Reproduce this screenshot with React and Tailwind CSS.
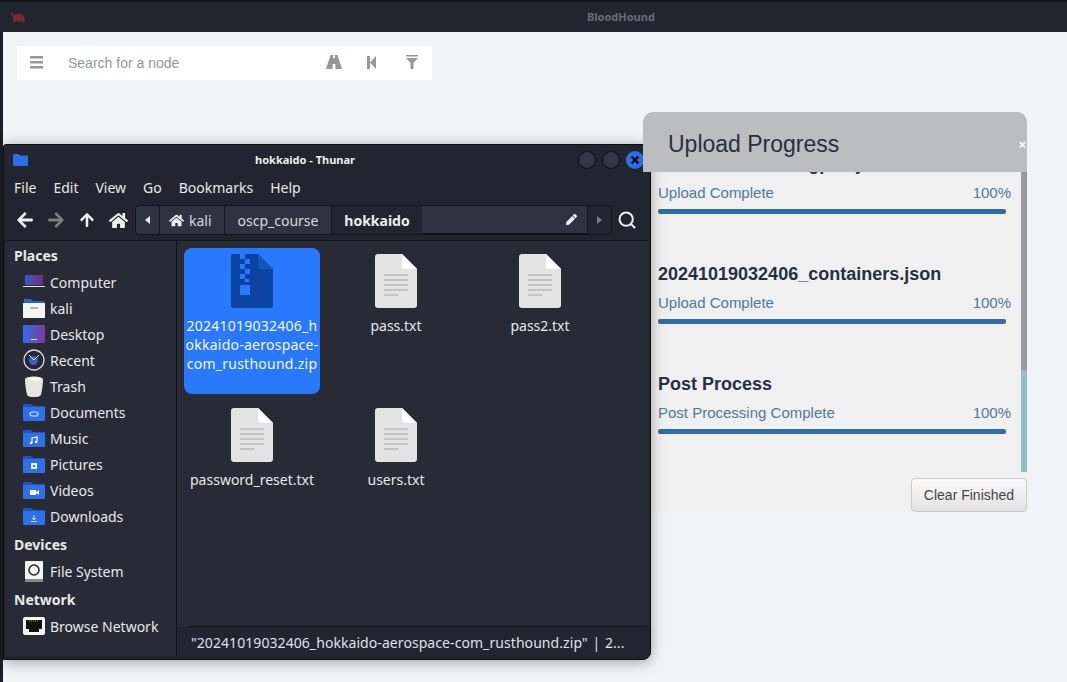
import React from "react";
import { FaPen, FaHome, FaArrowLeft, FaArrowRight, FaArrowUp } from "react-icons/fa";
import { FiSearch } from "react-icons/fi";

const Folder = ({ children }) => (
  <svg width="22" height="18" viewBox="0 0 22 18">
    <path d="M0 2a1 1 0 0 1 1-1h7l2 2h11a1 1 0 0 1 1 1v2H0z" fill="#1b55c9" />
    <path d="M0 4h22v13a1 1 0 0 1-1 1H1a1 1 0 0 1-1-1z" fill="#2f6fe8" />
    {children}
  </svg>
);

const sideIcons = {
  computer: (
    <svg width="22" height="14" viewBox="0 0 22 14">
      <defs>
        <linearGradient id="lap" x1="0" x2="1">
          <stop offset="0" stopColor="#3558c8" />
          <stop offset="1" stopColor="#7b2a7e" />
        </linearGradient>
      </defs>
      <rect x="2" y="0" width="18" height="10" fill="url(#lap)" />
      <rect x="0" y="11" width="22" height="1" fill="#e8e8e8" />
    </svg>
  ),
  kali: (
    <svg width="22" height="20" viewBox="0 0 22 20">
      <path d="M1 1h7l2 2h11v4H1z" fill="#2763d8" />
      <path d="M0 5h22v15H0z" fill="#f4f4f4" />
      <rect x="7" y="9" width="8" height="2" fill="#b5b5b5" />
    </svg>
  ),
  desktop: (
    <svg width="22" height="18" viewBox="0 0 22 18">
      <defs>
        <linearGradient id="dsk" x1="0" x2="1">
          <stop offset="0" stopColor="#2f6fe8" />
          <stop offset="1" stopColor="#7b3aa0" />
        </linearGradient>
      </defs>
      <rect width="22" height="18" rx="1" fill="url(#dsk)" />
      <rect x="8" y="14" width="6" height="1" fill="#e8e8e8" />
    </svg>
  ),
  recent: (
    <svg width="22" height="22" viewBox="0 0 22 22">
      <circle cx="11" cy="11" r="10" fill="#252935" stroke="#d8d8d8" strokeWidth="1.3" />
      <circle cx="10.5" cy="11.5" r="4.5" fill="#2763d8" />
      <path d="M11 11 6 6M11 11l5-5" stroke="#e8e8e8" strokeWidth="1" />
      <path d="M11 11v5" stroke="#c8382e" strokeWidth="1" />
    </svg>
  ),
  trash: (
    <svg width="18" height="21" viewBox="0 0 18 21">
      <path d="M0 3.500C0 -.5 18 -.5 18 3.500c0 5-1 11-2 15-.5 3.500-13.500 3.500-14 0-1-4-2-10-2-15z" fill="#e6e6e0" />
      <ellipse cx="9" cy="3" rx="7" ry="1.800" fill="#fbf7d8" />
    </svg>
  ),
  documents: (
    <Folder>
      <rect x="7" y="9" width="8" height="4" rx="2" fill="none" stroke="#cfe0ff" strokeWidth="1.200" />
    </Folder>
  ),
  music: (
    <Folder>
      <path d="M9 14V9l5-1v5" fill="none" stroke="#fff" strokeWidth="1.200" />
      <circle cx="8" cy="14" r="1.200" fill="#fff" />
      <circle cx="13" cy="13" r="1.200" fill="#fff" />
    </Folder>
  ),
  pictures: (
    <Folder>
      <rect x="8" y="8" width="6" height="6" fill="#e8f0ff" />
      <rect x="10" y="10" width="2" height="2" fill="#2f6fe8" />
    </Folder>
  ),
  videos: (
    <Folder>
      <rect x="7" y="9" width="6" height="5" fill="#fff" />
      <path d="M13 11l3-2v5l-3-2z" fill="#fff" />
    </Folder>
  ),
  downloads: (
    <Folder>
      <path d="M11 8v4M9 11l2 2 2-2M8 14.500h6" fill="none" stroke="#cfe0ff" strokeWidth="1" />
    </Folder>
  ),
  fs: (
    <svg width="18" height="21" viewBox="0 0 18 21">
      <rect width="18" height="21" rx="1" fill="#f4f4f4" />
      <circle cx="9" cy="9" r="5" fill="none" stroke="#222" strokeWidth="1.500" />
      <rect y="18" width="18" height="3" fill="#888" />
    </svg>
  ),
  net: (
    <svg width="22" height="19" viewBox="0 0 22 19">
      <rect width="22" height="18" rx="2" fill="#f6f6f6" />
      <path d="M3 3h16v9h-3v3H6v-3H3z" fill="#111" />
      <path d="M6 4h10" stroke="#d4a73a" strokeWidth="1" strokeDasharray="1 1" />
    </svg>
  ),
};

const SideRow = ({ icon, label }) => (
  <div className="flex items-center h-[26px] pl-[16px]">
    <span className="flex w-[28px] h-[22px] items-center justify-center shrink-0 pr-[2px]">{sideIcons[icon]}</span>
    <span className="ml-[1px] whitespace-nowrap">{label}</span>
  </div>
);

const TxtIcon = () => (
  <svg width="44" height="54" viewBox="0 0 44 54">
    <path d="M4 0h24l15 15v36a3 3 0 0 1-3 3H4a3 3 0 0 1-3-3V3a3 3 0 0 1 3-3z" fill="#e3e3e3" />
    <path d="M28 0l15 15H31a3 3 0 0 1-3-3z" fill="#ffffff" />
    <path d="M10 21h24M10 26h24M10 31h24M10 36h24M10 41h14" stroke="#a3a3a3" strokeWidth="1.200" />
  </svg>
);

const ZipIcon = () => (
  <svg width="44" height="54" viewBox="0 0 44 54">
    <path d="M3 0h25l15 15v37a2 2 0 0 1-2 2H3a2 2 0 0 1-2-2V2a2 2 0 0 1 2-2z" fill="#0a43a0" />
    <path d="M28 0l15 15H31a3 3 0 0 1-3-3z" fill="#1257b8" />
    <path d="M10 0h5v5h-5zM15 5h5v5h-5zM10 10h5v5h-5zM15 15h5v5h-5zM10 20h5v5h-5zM15 25h4v3h-4z" fill="#2979ff" />
    <rect x="10" y="31" width="10" height="10" fill="#2979ff" />
  </svg>
);

const Progress = ({ title, status, cls = "mb-[50px]" }) => (
  <div className={cls}>
    <div className="text-[18px] leading-[20px] font-bold text-[#27303f] whitespace-nowrap">{title}</div>
    <div className="flex justify-between mt-[9px] text-[15px] leading-[20px] text-[#4c7a9e]">
      <span>{status}</span>
      <span>100%</span>
    </div>
    <div className="mt-[6px] w-[348px] h-[5px] rounded-[2px] bg-[#2f6da3]" />
  </div>
);

function ThunarWindow() {
  return (
    <div
      className="absolute left-[3px] top-[144px] w-[648px] h-[516px] rounded-tr-[8px] rounded-br-[8px] rounded-tl-[3px] bg-[#22252f] border border-[#0d0e12] text-[#e8e8e8] text-[14px] flex flex-col shadow-[0_2px_14px_rgba(0,0,0,0.35)] overflow-hidden"
      style={{ fontFamily: '"Noto Sans", sans-serif' }}
    >
      {/* title bar */}
      <div className="relative h-[29px] flex items-center shrink-0">
        <svg className="ml-[9px]" width="15" height="12" viewBox="0 0 15 12">
          <path d="M0 1a1 1 0 0 1 1-1h4l2 1.500h7a1 1 0 0 1 1 1V11a1 1 0 0 1-1 1H1a1 1 0 0 1-1-1z" fill="#2b6fe8" />
        </svg>
        <div className="absolute inset-x-0 top-[7px] text-center text-[11px] leading-[16px] font-bold text-[#eeeeee] pr-[44px]">
          hokkaido - Thunar
        </div>
        <div className="ml-auto flex gap-[6px] mr-[6px] mt-[1px]">
          <span className="w-[18px] h-[18px] rounded-full bg-[#333846] border border-[#0d0e12]" />
          <span className="w-[18px] h-[18px] rounded-full bg-[#333846] border border-[#0d0e12]" />
          <span className="w-[18px] h-[18px] rounded-full bg-[#2b6fe8] flex items-center justify-center">
            <svg width="10" height="10" viewBox="0 0 10 10">
              <path d="M1.500 1.500l7 7M8.500 1.500l-7 7" stroke="#07090f" strokeWidth="2.400" />
            </svg>
          </span>
        </div>
      </div>
      {/* menu */}
      <div className="h-[26px] flex items-center gap-[17px] pl-[10px] shrink-0">
        {["File", "Edit", "View", "Go", "Bookmarks", "Help"].map((m) => (
          <span key={m}>{m}</span>
        ))}
      </div>
      {/* toolbar */}
      <div className="h-[41px] flex items-center shrink-0 border-b border-[#12141a] mx-[2px]">
        <FaArrowLeft className="ml-[10px] text-[#f0f0f0]" size={18} />
        <FaArrowRight className="ml-[13px] text-[#808080]" size={18} />
        <FaArrowUp className="ml-[14px] text-[#f0f0f0]" size={16} />
        <FaHome className="ml-[14px] text-[#f0f0f0]" size={19} />
        <div className="ml-[7px] h-[30px] flex items-stretch border border-[#12141a] rounded-[4px] bg-[#2f3341] w-[477px] overflow-hidden text-[#d7d9de]">
          <span className="w-[24px] flex items-center justify-center border-r border-[#12141a]">
            <svg width="5" height="8" viewBox="0 0 5 8"><path d="M5 0v8L0 4z" fill="#e8e8e8" /></svg>
          </span>
          <span className="w-[65px] flex items-center border-r border-[#12141a] pl-[9px] gap-[5px]">
            <FaHome size={15} className="text-[#eeeeee]" />
            kali
          </span>
          <span className="w-[107px] flex items-center justify-center border-r border-[#12141a]">oscp_course</span>
          <span className="w-[90px] flex items-center justify-center bg-[#22252f] font-bold text-[#eeeeee]">hokkaido</span>
          <span className="flex-1 flex items-center justify-end pr-[10px] border-b border-[#0d0e12]">
            <FaPen size={11} className="text-[#f0f0f0]" />
          </span>
          <span className="w-[24px] flex items-center justify-center bg-[#22252f] border-l border-[#12141a]">
            <svg width="5" height="8" viewBox="0 0 5 8"><path d="M0 0v8l5-4z" fill="#7d7f86" /></svg>
          </span>
        </div>
        <FiSearch className="ml-[5px] text-[#f0f0f0]" size={20} strokeWidth={2.4} />
      </div>
      {/* body */}
      <div className="flex-1 flex min-h-0 bg-[#282a36] mx-[1px] mb-[3px]">
        <div className="w-[172px] shrink-0 border-r border-[#12141a] pt-[1px]">
          <div className="h-[26px] mb-[1px] flex items-center pl-[9px] font-bold">Places</div>
          {[
            ["computer", "Computer"],
            ["kali", "kali"],
            ["desktop", "Desktop"],
            ["recent", "Recent"],
            ["trash", "Trash"],
            ["documents", "Documents"],
            ["music", "Music"],
            ["pictures", "Pictures"],
            ["videos", "Videos"],
            ["downloads", "Downloads"],
          ].map(([i, l]) => (
            <SideRow key={l} icon={i} label={l} />
          ))}
          <div className="h-[28px] flex items-center pl-[9px] font-bold mt-[1px]">Devices</div>
          <SideRow icon="fs" label="File System" />
          <div className="h-[28px] flex items-center pl-[9px] font-bold mt-[1px]">Network</div>
          <SideRow icon="net" label="Browse Network" />
        </div>
        <div className="flex-1 flex flex-col min-w-0">
          <div className="flex-1 pt-[7px] pl-[3px] grid grid-cols-[144px_144px_144px] grid-rows-[154px_154px] content-start">
            <div className="mx-[4px] h-[146px] rounded-[8px] bg-[#2979ff] flex flex-col items-center pt-[6px]">
              <ZipIcon />
              <div className="mt-[8px] w-[136px] text-center leading-[19px] break-all tracking-[0.25px] text-[#f4f7ff]">
                20241019032406_hokkaido-aerospace-com_rusthound.zip
              </div>
            </div>
            {["pass.txt", "pass2.txt", "password_reset.txt", "users.txt"].map((f) => (
              <div key={f} className="flex flex-col items-center pt-[6px]">
                <TxtIcon />
                <div className="mt-[8px] leading-[19px] text-center whitespace-nowrap">{f}</div>
              </div>
            ))}
          </div>
          <div className="h-[1px] ml-[10px] mr-[2px] bg-[#12141a]" />
          <div className="h-[29px] bg-[#22252f] flex items-center pt-[1px] pl-[14px] whitespace-nowrap tracking-[0.07px] [word-spacing:1px] text-[#dfe1e6]">
            "20241019032406_hokkaido-aerospace-com_rusthound.zip" | 2...
          </div>
        </div>
      </div>
    </div>
  );
}

function UploadPanel() {
  return (
    <div
      className="absolute left-[643px] top-[112px] w-[384px] h-[400px] flex flex-col bg-[#f0f0f0] rounded-t-[10px]"
      style={{ fontFamily: '"Liberation Sans", sans-serif' }}
    >
      <div className="relative h-[60px] shrink-0 bg-[#bcbdbf] rounded-t-[10px] flex items-center pl-[25px] z-10">
        <span className="text-[23px] leading-[26px] text-[#27303f] mt-[3px]">Upload Progress</span>
        <span className="absolute right-[1px] top-[25px] text-[13px] leading-[16px] font-bold text-white">×</span>
      </div>
      <div className="relative h-[300px] shrink-0 overflow-hidden flex">
        <div className="flex-1 pl-[15px] pr-[10px] -mt-[18px]">
          <Progress title="20241019032406_gpos.json" status="Upload Complete" />
          <Progress title="20241019032406_containers.json" status="Upload Complete" />
          <Progress title="Post Process" status="Post Processing Complete" cls="" />
        </div>
        <div className="w-[6px] shrink-0 flex flex-col">
          <div className="h-[198px] bg-[#99999e]" />
          <div className="flex-1 bg-[#93c0c6]" />
        </div>
      </div>
      <div className="flex justify-end pt-[6px]">
        <button className="w-[116px] h-[34px] border border-[#c9c9c9] rounded-[4px] bg-gradient-to-b from-[#fbfbfb] to-[#e2e2e2] text-[14px] text-[#444444]">
          Clear Finished
        </button>
      </div>
    </div>
  );
}

export default function App() {
  return (
    <div className="relative w-[1067px] h-[682px] overflow-hidden bg-[#f0f4f9]" style={{ fontFamily: '"Liberation Sans", sans-serif' }}>
      <div className="h-[32px] bg-[#21252e] border-t-2 border-[#0f1116] flex items-center">
        <svg className="ml-[10px]" width="15" height="11" viewBox="0 0 15 11">
          <path d="M0 0l1 0 3 3c3-1.500 8-1.500 10 2l1 5h-3l-1-2-1 2H8L7 8l-1 2H3.500l-.5-3L3 5z" fill="#7c2a30" />
        </svg>
        <span className="ml-[562px] text-[11px] font-bold text-[#666d7a]" style={{ fontFamily: '"Noto Sans", sans-serif' }}>BloodHound</span>
      </div>
      <div className="absolute left-0 top-[32px] bottom-0 w-[3px] bg-[#1b1e26]" />
      <div className="absolute left-[17px] top-[46px] w-[415px] h-[34px] bg-white flex items-center text-[#95979c]">
        <svg className="ml-[13px] -mt-[2px]" width="13" height="13" viewBox="0 0 13 13">
          <path d="M0 0h13v2.500H0zM0 5h13v2.500H0zM0 10h13v2.500H0z" fill="currentColor" />
        </svg>
        <span className="ml-[25px] text-[14px]">Search for a node</span>
        <svg className="ml-[147px] -mt-[2px]" width="16" height="14" viewBox="0 0 16 14">
          <path d="M4.500 0h2.700l-.2 3h2L8.800 0h2.700L16 14H9.500L9.300 9H6.700L6.500 14H0z" fill="currentColor" />
        </svg>
        <svg className="ml-[25px] -mt-[1px]" width="9" height="13" viewBox="0 0 9 13">
          <path d="M0 0h3v13H0zM9 0v13L3 6.500z" fill="currentColor" />
        </svg>
        <svg className="ml-[30px] -mt-[2px]" width="12" height="14" viewBox="0 0 12 14">
          <path d="M0 0h12v1.500H0zM0 3h12L7.500 8v6h-3V8z" fill="currentColor" />
        </svg>
      </div>
      <UploadPanel />
      <ThunarWindow />
    </div>
  );
}
